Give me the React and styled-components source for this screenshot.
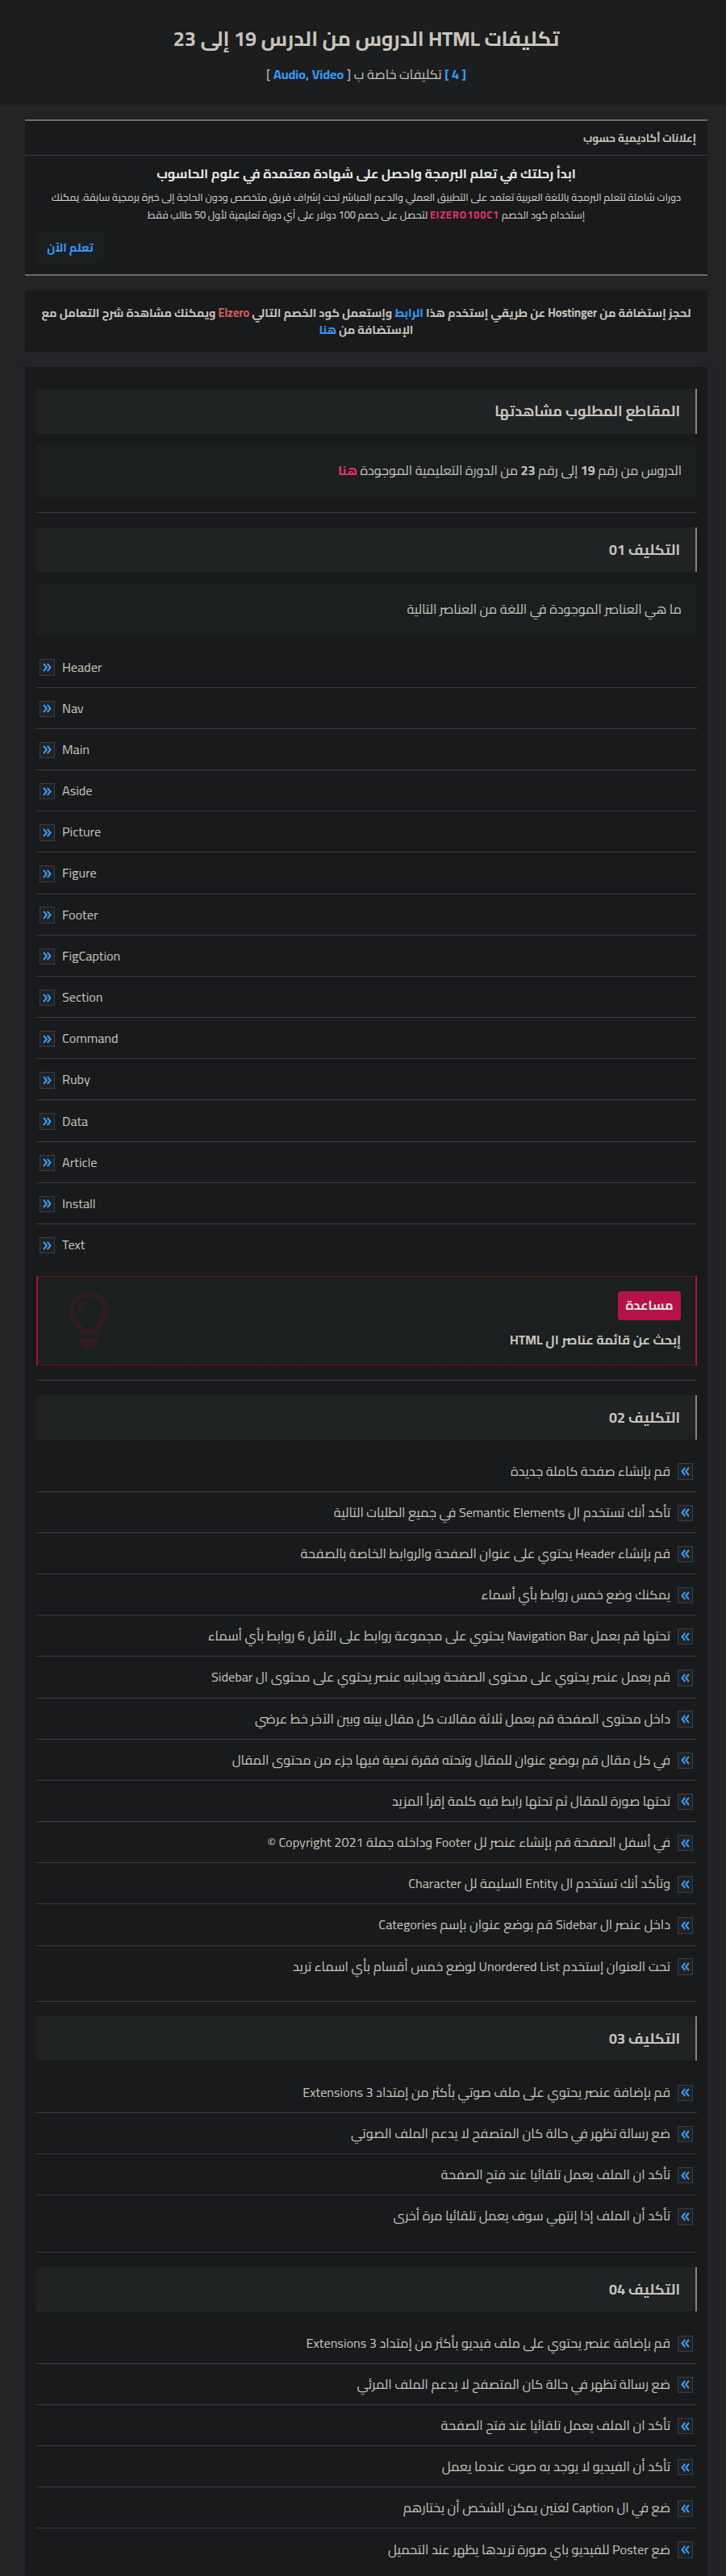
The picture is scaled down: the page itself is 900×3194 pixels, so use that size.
import React from 'react';
import styled, { createGlobalStyle } from 'styled-components';

const BLUE = '#349cff';
const PINK = '#e8336d';

const GlobalStyle = createGlobalStyle`
  * { box-sizing: border-box; }
  body {
    margin: 0;
    background: #222426;
    color: #c8c3bc;
    font-family: Cairo, "Open Sans", "DejaVu Sans Condensed", sans-serif;
    font-size: 16.18px;
    direction: rtl;
  }
  h1, h2, h3, p, ul { margin: 0; padding: 0; font-size: inherit; }
`;

const Page = styled.div`
  height: 3194px;
  overflow: hidden;
`;

const Header = styled.header`
  height: 130px;
  padding: 25px 0 0 8px;
  background: #1b1d1e;
  text-align: center;
`;

const Title = styled.h1`
  font-size: 25.3px;
  line-height: 46px;
  font-weight: 700;
`;

const Subtitle = styled.p`
  font-size: 16.2px;
  line-height: 30px;
  margin-top: 6px;
  b { color: ${BLUE}; }
`;

const Container = styled.main`
  width: 846px;
  margin: 18px 23px 0 0;
  display: flex;
  flex-direction: column;
`;

const AdBox = styled.section`
  height: 194px;
  background: #181a1b;
  border: solid #736b5e;
  border-width: 2px 0;
  display: flex;
  flex-direction: column;
`;

const AdTitle = styled.h3`
  height: 43px;
  padding: 0 14px;
  font-size: 13.45px;
  font-weight: 700;
  line-height: 43px;
  border-bottom: 1px solid #393d40;
`;

const AdHeading = styled.h2`
  margin-top: 6px;
  font-size: 16.2px;
  line-height: 32px;
  font-weight: 700;
  color: #e8e6e3;
  text-align: center;
`;

const AdText = styled.p`
  font-size: 12.6px;
  line-height: 22px;
  margin-top: 3px;
  color: #d8d4cf;
  text-align: center;
  white-space: nowrap;
  b { color: ${PINK}; letter-spacing: 1px; }
`;

const AdButton = styled.a`
  align-self: flex-end;
  width: 84px;
  height: 38px;
  margin: 10px 0 0 14px;
  border-radius: 5px;
  background: #1b1f20;
  color: ${BLUE};
  font-size: 14.4px;
  font-weight: 700;
  line-height: 38px;
  text-align: center;
`;

const Notice = styled.section`
  height: 77px;
  margin-top: 18px;
  padding-top: 17px;
  background: #181a1b;
  font-size: 14.4px;
  font-weight: 700;
  line-height: 21px;
  text-align: center;
  white-space: nowrap;
`;

const Mark = styled.span`
  color: ${(p) => p.$color};
  font-weight: 700;
`;

const Panel = styled.section`
  min-height: 2739px;
  margin-top: 18px;
  padding: 27px 13px 0 14px;
  background: #181a1b;
  box-shadow: 0 0 10px #27292b;
`;

const Heading = styled.h2`
  height: 55.6px;
  padding: 0 19px;
  background: #1f2324;
  border-right: 2px solid #8c8273;
  font-size: 17.9px;
  font-weight: 700;
  line-height: 55px;
`;

const Question = styled.p`
  height: 65.6px;
  margin-top: 13.4px;
  padding: 0 19px;
  background: #1b1f20;
  line-height: 65px;
  b { font-weight: 700; }
`;

const Divider = styled.div`
  height: 1px;
  margin: 18px 0;
  background: #393d40;
`;

const List = styled.ul`
  direction: ${(p) => p.$dir};
  list-style: none;
  padding: 13.4px 0 ${(p) => p.$bottom}px;
`;

const Item = styled.li`
  display: flex;
  align-items: center;
  gap: 9px;
  height: 51.18px;
  padding: 0 5px 0 4px;
  border-bottom: 1px solid #393d40;
  line-height: 30px;
  white-space: nowrap;
  &:last-child { border-bottom: 0; height: 50.2px; }
`;

const Bullet = styled.span`
  display: flex;
  align-items: center;
  justify-content: center;
  width: 19px;
  height: 20.4px;
  margin-top: 2px;
  border: 1px solid #3a3e41;
  background: #1f2223;
  color: ${BLUE};
  svg { transform: scaleX(${(p) => (p.$dir === 'rtl' ? -1 : 1)}); }
`;

const Help = styled.section`
  display: flex;
  justify-content: space-between;
  align-items: flex-start;
  height: 111px;
  margin-top: 13.4px;
  padding: 18px 18px 0 38px;
  background: #1b1f20;
  border-style: dashed solid;
  border-width: 1px 2px;
  border-color: #c00000 #a8123f;
`;

const Badge = styled.span`
  display: block;
  width: 78px;
  height: 36px;
  border-radius: 4px;
  background: #b5124a;
  color: #e8e6e3;
  font-weight: 700;
  font-size: 16px;
  line-height: 34px;
  text-align: center;
`;

const HelpText = styled.p`
  margin-top: 9px;
  font-weight: 700;
  line-height: 30px;
`;

const BulbDrawing = styled.svg`
  width: 50px;
  height: 72px;
  color: #2f1d24;
`;

const Bulb = () => (
  <BulbDrawing viewBox="0 0 150 216" fill="none">
    <path
      d="M51 151.500 H99 C106 127 139 107 139.500 75 A64.500 64.500 0 0 0 10.500 75 C11 107 44 127 51 151.500 Z"
      stroke="currentColor"
      strokeWidth="21"
    />
    <path d="M41 67 A27 27 0 0 1 68 40" stroke="currentColor" strokeWidth="14" strokeLinecap="round" />
    <path d="M40 174 H109 V190 Q109 195 106 199 L98 211 Q94 216 88 216 H61 Q55 216 51 211 L43 199 Q40 195 40 190 Z" fill="currentColor" />
  </BulbDrawing>
);

const Chevrons = () => (
  <svg width="11" height="11" viewBox="0 0 11 11" fill="none" stroke="currentColor" strokeWidth="2">
    <path d="M1 1 L4.800 5.500 L1 10 M5.700 1 L9.500 5.500 L5.700 10" />
  </svg>
);

const Items = ({ items, dir = 'rtl', bottom = 0 }) => (
  <List $dir={dir} $bottom={bottom}>
    {items.map((text) => (
      <Item key={text}>
        <Bullet $dir={dir}><Chevrons /></Bullet>
        {text}
      </Item>
    ))}
  </List>
);

const ELEMENTS = ['Header', 'Nav', 'Main', 'Aside', 'Picture', 'Figure', 'Footer', 'FigCaption', 'Section', 'Command', 'Ruby', 'Data', 'Article', 'Install', 'Text'];

const TASK_2 = [
  'قم بإنشاء صفحة كاملة جديدة',
  'تأكد أنك تستخدم ال Semantic Elements في جميع الطلبات التالية',
  'قم بإنشاء Header يحتوي على عنوان الصفحة والروابط الخاصة بالصفحة',
  'يمكنك وضع خمس روابط بأي أسماء',
  'تحتها قم بعمل Navigation Bar يحتوي على مجموعة روابط على الأقل 6 روابط بأي أسماء',
  'قم بعمل عنصر يحتوي على محتوى الصفحة وبجانبه عنصر يحتوي على محتوى ال Sidebar',
  'داخل محتوى الصفحة قم بعمل ثلاثة مقالات كل مقال بينه وبين الآخر خط عرضي',
  'في كل مقال قم بوضع عنوان للمقال وتحته فقرة نصية فيها جزء من محتوى المقال',
  'تحتها صورة للمقال ثم تحتها رابط فيه كلمة إقرأ المزيد',
  'في أسفل الصفحة قم بإنشاء عنصر لل Footer وداخله جملة Copyright 2021 ©',
  'وتأكد أنك تستخدم ال Entity السليمة لل Character',
  'داخل عنصر ال Sidebar قم بوضع عنوان بإسم Categories',
  'تحت العنوان إستخدم Unordered List لوضع خمس أقسام بأي اسماء تريد',
];

const TASK_3 = [
  'قم بإضافة عنصر يحتوي على ملف صوتي بأكثر من إمتداد 3 Extensions',
  'ضع رسالة تظهر في حالة كان المتصفح لا يدعم الملف الصوتي',
  'تأكد ان الملف يعمل تلقائيا عند فتح الصفحة',
  'تأكد أن الملف إذا إنتهي سوف يعمل تلقائيا مرة أخرى',
];

const TASK_4 = [
  'قم بإضافة عنصر يحتوي على ملف فيديو بأكثر من إمتداد 3 Extensions',
  'ضع رسالة تظهر في حالة كان المتصفح لا يدعم الملف المرئي',
  'تأكد ان الملف يعمل تلقائيا عند فتح الصفحة',
  'تأكد أن الفيديو لا يوجد به صوت عندما يعمل',
  'ضع في ال Caption لغتين يمكن الشخص أن يختارهم',
  'ضع Poster للفيديو باي صورة تريدها يظهر عند التحميل',
];

export default function App() {
  return (
    <Page>
      <GlobalStyle />
      <Header>
        <Title>تكليفات HTML الدروس من الدرس 19 إلى 23</Title>
        <Subtitle><b>[ 4 ]</b> تكليفات خاصة ب [ <b>Audio, Video</b> ]</Subtitle>
      </Header>
      <Container>
        <AdBox>
          <AdTitle>إعلانات أكاديمية حسوب</AdTitle>
          <AdHeading>ابدأ رحلتك في تعلم البرمجة واحصل على شهادة معتمدة في علوم الحاسوب</AdHeading>
          <AdText>
            دورات شاملة لتعلم البرمجة باللغة العربية تعتمد على التطبيق العملي والدعم المباشر تحت إشراف فريق متخصص ودون الحاجة إلى خبرة برمجية سابقة. يمكنك
            <br />
            إستخدام كود الخصم <b>EIZERO100C1</b> لتحصل على خصم 100 دولار على أي دورة تعليمية لأول 50 طالب فقط
          </AdText>
          <AdButton>تعلم الآن</AdButton>
        </AdBox>
        <Notice>
          لحجز إستضافة من Hostinger عن طريقي إستخدم هذا <Mark $color={BLUE}>الرابط</Mark> وإستعمل كود الخصم التالي <Mark $color="#d45d5d">Elzero</Mark> ويمكنك مشاهدة شرح التعامل مع
          <br />
          الإستضافة من <Mark $color={BLUE}>هنا</Mark>
        </Notice>
        <Panel>
          <Heading>المقاطع المطلوب مشاهدتها</Heading>
          <Question>
            الدروس من رقم <b>19</b> إلى رقم <b>23</b> من الدورة التعليمية الموجودة <Mark $color={PINK}>هنا</Mark>
          </Question>
          <Divider />
          <Heading>التكليف 01</Heading>
          <Question>ما هي العناصر الموجودة في اللغة من العناصر التالية</Question>
          <Items items={ELEMENTS} dir="ltr" />
          <Help>
            <div>
              <Badge>مساعدة</Badge>
              <HelpText>إبحث عن قائمة عناصر ال HTML</HelpText>
            </div>
            <Bulb />
          </Help>
          <Divider />
          <Heading>التكليف 02</Heading>
          <Items items={TASK_2} />
          <Divider />
          <Heading>التكليف 03</Heading>
          <Items items={TASK_3} bottom={1.2} />
          <Divider />
          <Heading>التكليف 04</Heading>
          <Items items={TASK_4} />
        </Panel>
      </Container>
    </Page>
  );
}
